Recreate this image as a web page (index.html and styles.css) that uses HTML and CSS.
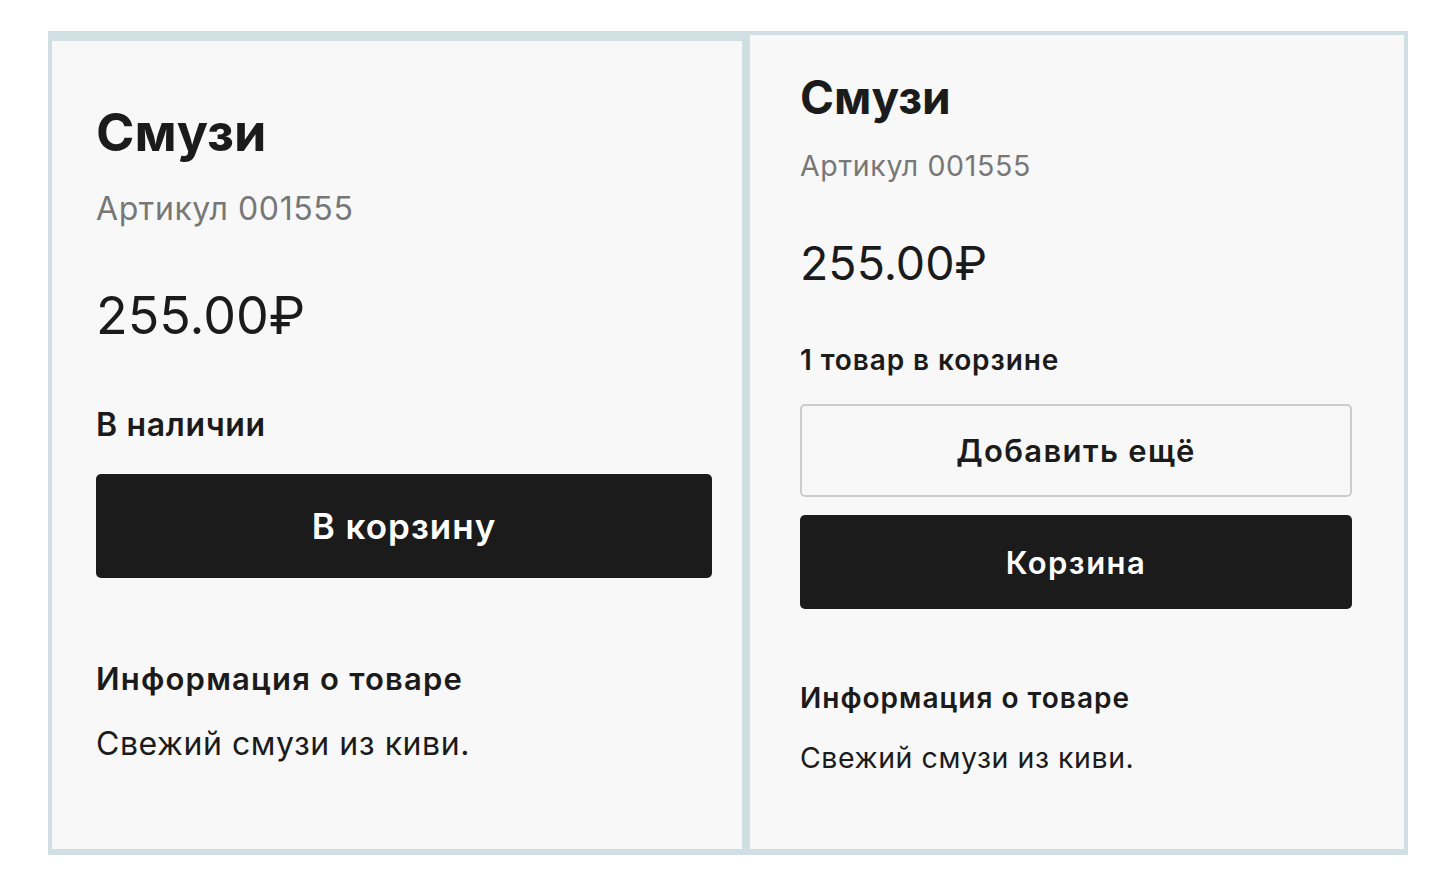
FILE: index.html
```html
<!DOCTYPE html>
<html lang="ru">
<head>
<meta charset="utf-8">
<title>Смузи</title>
<link rel="stylesheet" href="styles.css">
</head>
<body>
<div class="frame">
  <section class="card card--lg">
    <h1 class="title">Смузи</h1>
    <div class="sku">Артикул 001555</div>
    <div class="price">255.00₽</div>
    <div class="stock">В наличии</div>
    <button class="btn btn--dark">В корзину</button>
    <h2 class="info-title">Информация о товаре</h2>
    <p class="info-text">Свежий смузи из киви.</p>
  </section>
  <section class="card card--sm">
    <h1 class="title">Смузи</h1>
    <div class="sku">Артикул 001555</div>
    <div class="price">255.00₽</div>
    <div class="stock">1 товар в корзине</div>
    <button class="btn btn--outline">Добавить ещё</button>
    <button class="btn btn--dark">Корзина</button>
    <h2 class="info-title">Информация о товаре</h2>
    <p class="info-text">Свежий смузи из киви.</p>
  </section>
</div>
</body>
</html>
```

FILE: styles.css
```css
* { box-sizing: border-box; }
html, body { margin: 0; padding: 0; background: #ffffff; }
body { font-family: Inter, "Noto Sans", sans-serif; color: #1b1b1b; }

.frame {
  display: flex;
  align-items: flex-end;
  gap: 8px;
  margin: 31px 0 0 48px;
  width: 1360px;
  height: 824px;
  padding: 4px 4px 6px 4px;
  background: #cfdfe2;
}

.card {
  display: flex;
  flex-direction: column;
  align-items: stretch;
  background: #f8f8f8;
}

.title, .sku, .price, .stock, .info-title, .info-text { margin: 0; }
.title { font-weight: 700; }
.sku { color: #777777; font-weight: 400; }
.price { font-weight: 400; }
.stock { font-weight: 600; }
.info-title { font-weight: 600; }
.info-text { font-weight: 400; }

.btn {
  font-family: inherit;
  font-weight: 600;
  border-radius: 5px;
  cursor: pointer;
  padding: 0;
}
.btn--dark { background: #1b1b1b; color: #ffffff; border: none; }
.btn--outline { background: #f8f8f8; color: #1b1b1b; border: 2px solid #cccccc; }

/* large card */
.card--lg {
  width: 690px;
  height: 808px;
  padding: 62px 30px 0 44px;
}
.card--lg .title { font-size: 52px; line-height: 60px; }
.card--lg .sku { font-size: 32px; line-height: 40px; margin-top: 26px; letter-spacing: 0.6px; }
.card--lg .price { font-size: 52px; line-height: 64px; margin-top: 55px; }
.card--lg .stock { font-size: 32px; line-height: 40px; margin-top: 57px; letter-spacing: 0.65px; }
.card--lg .btn { height: 104px; font-size: 35px; margin-top: 29px; letter-spacing: 1px; }
.card--lg .info-title { font-size: 31px; line-height: 40px; margin-top: 81px; letter-spacing: 1.2px; }
.card--lg .info-text { font-size: 32px; line-height: 40px; margin-top: 25px; letter-spacing: 0.55px; }

/* small card */
.card--sm {
  width: 654px;
  height: 814px;
  padding: 36px 52px 0 50px;
}
.card--sm .title { font-size: 46px; line-height: 52px; }
.card--sm .sku { font-size: 28.5px; line-height: 36px; margin-top: 25px; letter-spacing: 0.65px; }
.card--sm .price { font-size: 46.5px; line-height: 56px; margin-top: 51px; }
.card--sm .stock { font-size: 28px; line-height: 36px; margin-top: 51px; letter-spacing: 0.9px; }
.card--sm .btn--outline { height: 93px; font-size: 31px; margin-top: 26px; letter-spacing: 1.35px; }
.card--sm .btn--dark { height: 94px; font-size: 31px; margin-top: 18px; letter-spacing: 1.45px; }
.card--sm .info-title { font-size: 28px; line-height: 36px; margin-top: 71px; letter-spacing: 1px; }
.card--sm .info-text { font-size: 28.5px; line-height: 36px; margin-top: 24px; letter-spacing: 0.55px; }
```
